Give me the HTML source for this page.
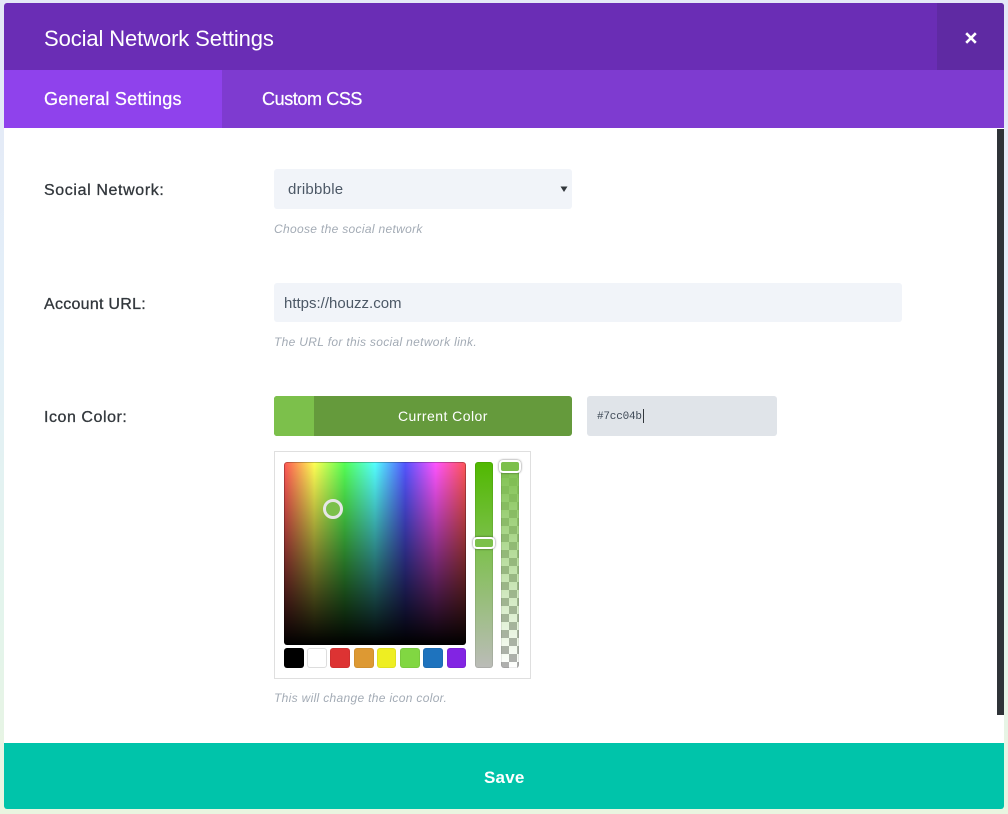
<!DOCTYPE html>
<html lang="en">
<head>
<meta charset="utf-8">
<title>Social Network Settings</title>
<style>
html,body{margin:0;padding:0;width:1008px;height:814px;overflow:hidden}
body{position:relative;background:linear-gradient(180deg,#e4e8f6 0%,#e3eff8 40%,#e3f4ec 75%,#e9f5e0 100%);font-family:"Liberation Sans",sans-serif}
.a{position:absolute;white-space:nowrap}
#modal{position:absolute;left:4px;top:3px;width:1000px;height:806px;background:#fff;border-radius:3px;overflow:hidden}
.lbl{font-size:16px;font-weight:400;color:#32373c;-webkit-text-stroke:.3px #32373c;line-height:20px}
.desc{font-size:12px;font-style:italic;color:#a3abb5;line-height:16px;letter-spacing:.32px}
.val{font-size:15px;color:#4c5866;line-height:18px}
.sw{position:absolute;top:648px;height:20px;border-radius:3px;box-sizing:border-box;box-shadow:inset 0 0 0 1px rgba(0,0,0,.06)}
.hd{position:absolute;box-sizing:border-box;border:2px solid #fff;border-radius:4px;background:#7cc04b;box-shadow:0 0 2px rgba(0,0,0,.55)}
</style>
</head>
<body>
<div id="modal"></div>

<div class="a" style="left:4px;top:3px;width:1000px;height:67px;background:#6a2db5;border-radius:3px 3px 0 0"></div>
<div class="a" style="left:937px;top:3px;width:67px;height:67px;background:#5f2aa3;border-radius:0 3px 0 0"></div>
<div class="a" style="left:44px;top:26px;font-size:22px;line-height:26px;color:#fff;letter-spacing:-.11px">Social Network Settings</div>
<svg class="a" style="left:964px;top:31px" width="14" height="14" viewBox="0 0 14 14"><path d="M2.2 2.2L11.8 11.8M11.8 2.2L2.2 11.8" stroke="#fff" stroke-width="2.6" fill="none"/></svg>

<div class="a" style="left:4px;top:70px;width:1000px;height:58px;background:#7e3bd0"></div>
<div class="a" style="left:4px;top:70px;width:218px;height:58px;background:#8f42ec"></div>
<div class="a" style="left:44px;top:88px;font-size:18px;line-height:22px;color:#fff;-webkit-text-stroke:.25px #fff;letter-spacing:.23px">General Settings</div>
<div class="a" style="left:262px;top:88px;font-size:18px;line-height:22px;color:#fff;-webkit-text-stroke:.25px #fff;letter-spacing:-.4px">Custom CSS</div>

<div class="a" style="left:997px;top:129px;width:7px;height:586px;background:#2e3338"></div>

<div class="a lbl" style="left:44px;top:181px;letter-spacing:.62px">Social Network:</div>
<div class="a" style="left:274px;top:169px;width:298px;height:40px;background:#f1f4f9;border-radius:3px"></div>
<div class="a val" style="left:288px;top:181px;letter-spacing:.25px">dribbble</div>
<svg class="a" style="left:560px;top:185px" width="8" height="8" viewBox="0 0 8 8"><path d="M.5 1.5H7.5L4 7Z" fill="#32373c"/></svg>
<div class="a desc" style="left:274px;top:221px">Choose the social network</div>

<div class="a lbl" style="left:44px;top:295px;letter-spacing:.27px">Account URL:</div>
<div class="a" style="left:274px;top:283px;width:628px;height:39px;background:#f1f4f9;border-radius:3px"></div>
<div class="a val" style="left:284px;top:295px">https://houzz.com</div>
<div class="a desc" style="left:274px;top:334px">The URL for this social network link.</div>

<div class="a lbl" style="left:44px;top:408px;letter-spacing:.55px">Icon Color:</div>
<div class="a" style="left:274px;top:396px;width:298px;height:40px;background:#659a3c;border-radius:3px;overflow:hidden"><div style="width:40px;height:40px;background:#7cc04b"></div></div>
<div class="a" style="left:398px;top:407px;font-size:14px;line-height:18px;color:#fff;letter-spacing:.45px">Current Color</div>
<div class="a" style="left:587px;top:396px;width:190px;height:40px;background:#e0e4e9;border-radius:3px"></div>
<div class="a" style="left:597px;top:410px;font-family:'Liberation Mono',monospace;font-size:11px;line-height:14px;color:#3f4a57;letter-spacing:-.2px">#7cc04b</div>
<div class="a" style="left:643px;top:409px;width:1px;height:14px;background:#32373c"></div>

<div class="a" style="left:274px;top:451px;width:257px;height:228px;box-sizing:border-box;border:1px solid #dfdfdf;background:#fff"></div>

<div class="a" style="left:284px;top:462px;width:182px;height:183px;border-radius:3px;background:linear-gradient(180deg,rgba(0,0,0,0) 0%,rgba(0,0,0,.5) 50%,#000 100%),linear-gradient(90deg,#ff5555 0%,#ffff55 16.67%,#55ff55 33.33%,#55ffff 50%,#5555ff 66.67%,#ff55ff 83.33%,#ff5555 100%);box-shadow:inset 0 0 0 1px rgba(0,0,0,.25)"></div>
<div class="a" style="left:323px;top:499px;width:20px;height:20px;box-sizing:border-box;border:3px solid #e6e6e6;border-radius:50%;background:#7cc04b"></div>

<div class="sw" style="left:284px;width:20px;background:#000"></div>
<div class="sw" style="left:307px;width:20px;background:#fff;border:1px solid #ddd;box-shadow:none"></div>
<div class="sw" style="left:330px;width:20px;background:#dd3333"></div>
<div class="sw" style="left:354px;width:20px;background:#dd9933"></div>
<div class="sw" style="left:377px;width:19px;background:#eeee22"></div>
<div class="sw" style="left:400px;width:20px;background:#81d742"></div>
<div class="sw" style="left:423px;width:20px;background:#1e73be"></div>
<div class="sw" style="left:447px;width:19px;background:#8224e3"></div>

<div class="a" style="left:475px;top:462px;width:18px;height:206px;border-radius:3px;background:linear-gradient(180deg,#50b800 0%,#7cc04b 40%,#bbbcb8 100%);box-shadow:inset 0 0 0 1px rgba(0,0,0,.08)"></div>
<div class="hd" style="left:473px;top:537px;width:22px;height:12px"></div>

<div class="a" style="left:501px;top:462px;width:18px;height:206px;border-radius:3px;background:linear-gradient(180deg,#7cc04b 0%,rgba(124,192,75,.85) 15%,rgba(124,192,75,0) 100%),repeating-conic-gradient(#b0b0b0 0 25%,#fff 0 50%) 0 0/16px 16px;box-shadow:inset 0 0 0 1px rgba(0,0,0,.08)"></div>
<div class="hd" style="left:499px;top:460px;width:22px;height:13px"></div>

<div class="a desc" style="left:274px;top:690px">This will change the icon color.</div>

<div class="a" style="left:4px;top:743px;width:1000px;height:66px;background:#00c4aa;border-radius:0 0 3px 3px"></div>
<div class="a" style="left:484px;top:768px;font-size:17px;line-height:20px;font-weight:700;color:#fff;letter-spacing:.2px">Save</div>
</body>
</html>
